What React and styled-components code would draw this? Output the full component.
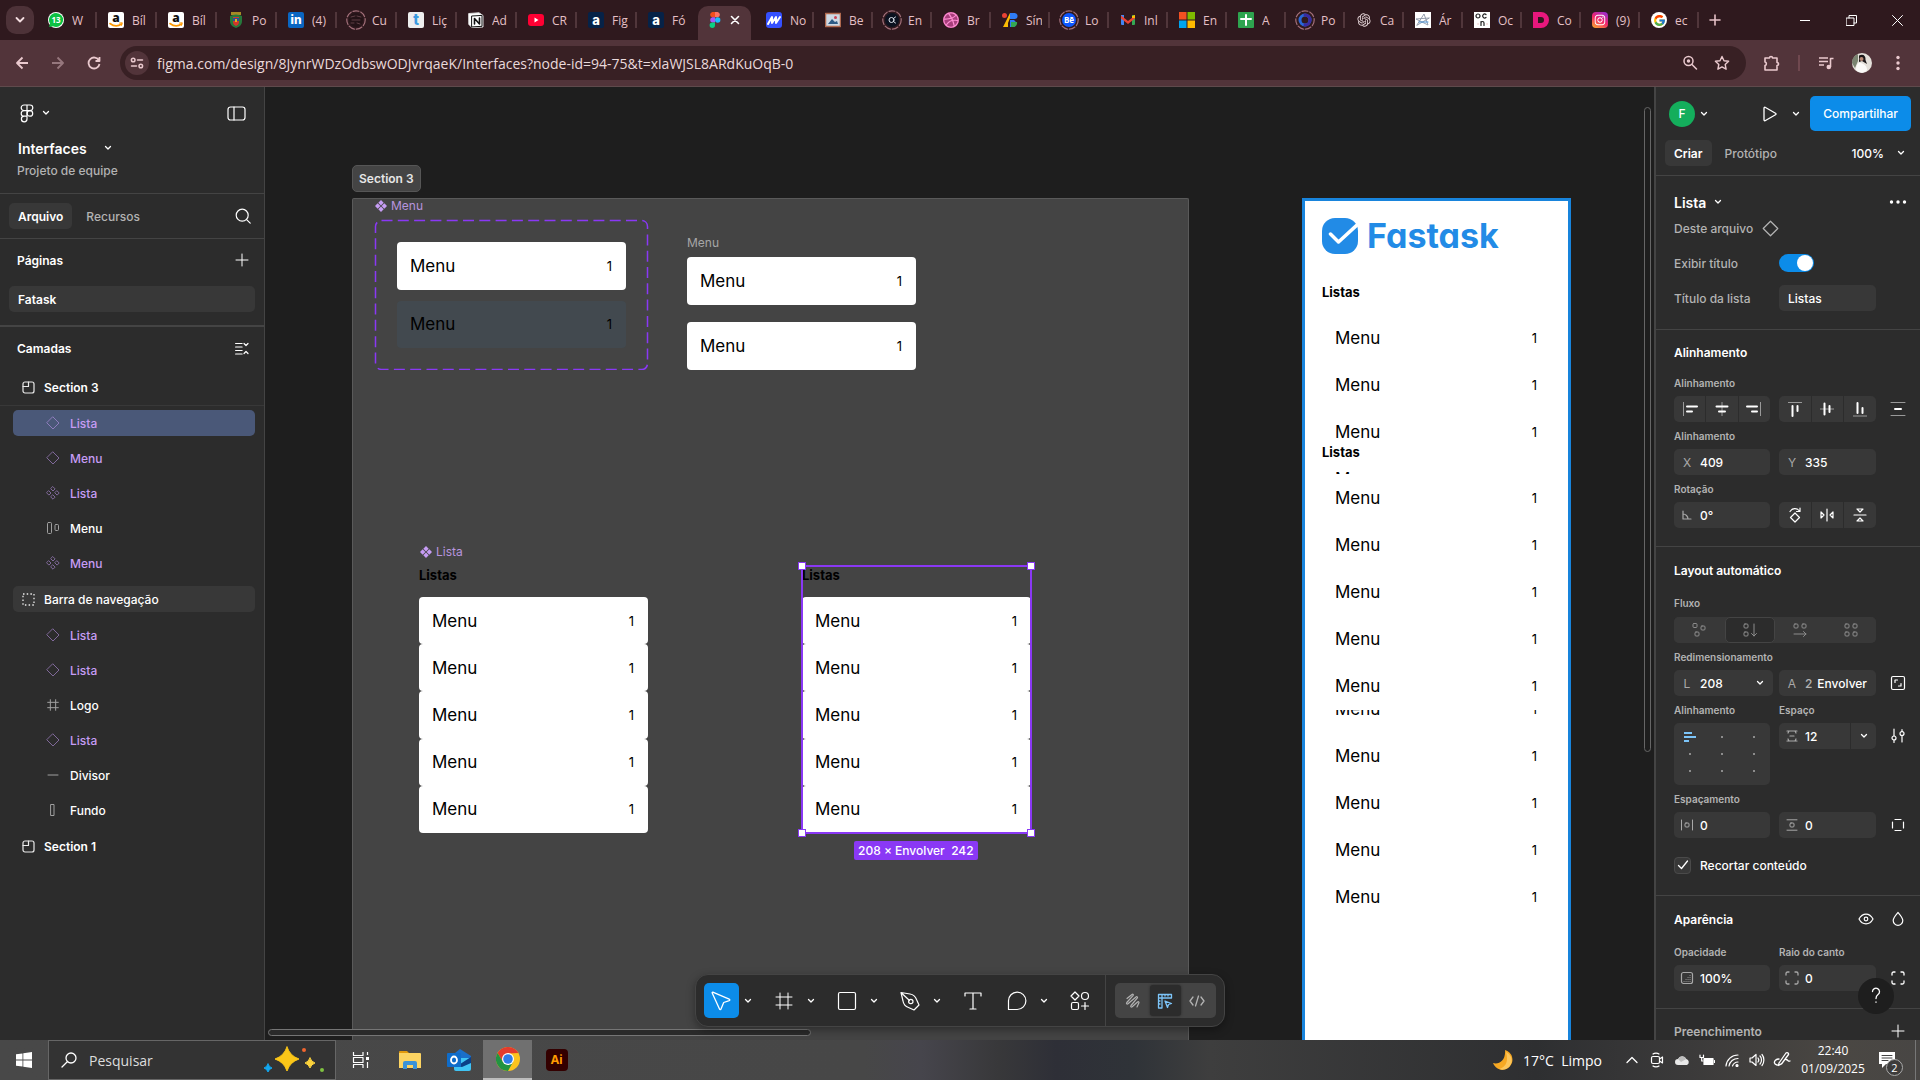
import React, { useState } from "react";
import styled, { createGlobalStyle, css } from "styled-components";
import { FaDribbble, FaInstagram } from "react-icons/fa";
import { RiOpenaiFill } from "react-icons/ri";
import { FcGoogle } from "react-icons/fc";

const GlobalStyle = createGlobalStyle`
  * { box-sizing: border-box; }
  body {
    margin: 0;
    overflow: hidden;
    background: #1e1e1e;
    color: #fff;
    font-family: Inter, "Liberation Sans", sans-serif;
    font-size: 12px;
  }
  button, input {
    font: inherit;
    color: inherit;
    border: 0;
    padding: 0;
    margin: 0;
    background: none;
    min-width: 0;
  }
  svg { display: block; flex: none; }
`;

/* ---------- icons ---------- */

const Icon = ({ w = 16, h = w, sw = 1, children, ...rest }) => (
  <svg
    width={w}
    height={h}
    viewBox={`0 0 ${w} ${h}`}
    fill="none"
    stroke="currentColor"
    strokeWidth={sw}
    strokeLinecap="round"
    strokeLinejoin="round"
    aria-hidden="true"
    {...rest}
  >
    {children}
  </svg>
);

const Chevron = () => (
  <Icon w={8} h={6} sw={1.3}>
    <path d="M1.5 1.5 4 4l2.5-2.5" />
  </Icon>
);

const Plus = () => (
  <Icon w={14}>
    <path d="M7 1v12M1 7h12" />
  </Icon>
);

const FigmaOutline = () => (
  <Icon w={14} h={19} sw={1.2}>
    <path d="M7 1H4a2.8 2.8 0 0 0 0 5.6h3zM7 1h3a2.8 2.8 0 0 1 0 5.6H7zM7 6.6H4a2.8 2.8 0 0 0 0 5.6h3zM7 12.2H4A2.8 2.8 0 1 0 7 15z" />
    <circle cx="9.9" cy="9.4" r="2.8" />
  </Icon>
);

const PanelIcon = () => (
  <Icon w={19} h={15} sw={1.2}>
    <rect x="1" y="1" width="17" height="13" rx="2.5" />
    <path d="M7 1v13" />
  </Icon>
);

const SearchIcon = () => (
  <Icon w={16} sw={1.2}>
    <circle cx="7.2" cy="7.2" r="6" />
    <path d="m11.6 11.6 3.6 3.6" />
  </Icon>
);

const CollapseIcon = () => (
  <Icon w={14} h={13} sw={1.2}>
    <path d="M.6 1.5h6.5M.6 5h6.5M.6 8.5h6.5M.6 12h6.5M9 1.5l2 2 2-2M9 11.5l2-2 2 2" />
  </Icon>
);

const SectionIcon = () => (
  <Icon w={13} sw={1.2}>
    <rect x="1" y="1" width="11" height="11" rx="2" />
    <path d="M6.5 1v4.5H1" />
  </Icon>
);

const Diamond = ({ s = 14 }) => (
  <Icon w={14} width={s} height={s} sw={1}>
    <path d="M7 1l6 6-6 6-6-6z" />
  </Icon>
);

const ComponentIcon = () => (
  <Icon w={14} sw={1}>
    <path d="M7 .8l2.1 2.1L7 5 4.9 2.9zM7 9l2.1 2.1L7 13.2 4.9 11.1zM2.9 4.9 5 7 2.9 9.1.8 7zM11.1 4.9 13.2 7l-2.1 2.1L9 7z" />
  </Icon>
);

const AutoLayoutIcon = () => (
  <Icon w={14}>
    <rect x="1.5" y="1.5" width="4" height="11" rx="1" />
    <rect x="9" y="3.5" width="3.5" height="6" rx="1" />
  </Icon>
);

const GroupIcon = () => (
  <Icon w={13} sw={1.3} strokeDasharray="1.5 2.2" strokeLinecap="butt">
    <rect x="1" y="1" width="11" height="11" />
  </Icon>
);

const FrameIcon = ({ s = 12 }) => (
  <Icon w={18} width={s} height={s} sw={18 / s}>
    <path d="M5 1v16M13 1v16M1 5h16M1 13h16" />
  </Icon>
);

const LineIcon = () => (
  <Icon w={14}>
    <path d="M2 7h10" />
  </Icon>
);

const RectIcon = () => (
  <Icon w={14}>
    <rect x="5" y="1.5" width="3" height="11" />
  </Icon>
);

const layerIcons = {
  section: SectionIcon,
  instance: Diamond,
  component: ComponentIcon,
  auto: AutoLayoutIcon,
  group: GroupIcon,
  frame: FrameIcon,
  line: LineIcon,
  rect: RectIcon,
};

/* ---------- browser chrome ---------- */

const Page = styled.div`
  display: grid;
  grid-template-rows: auto auto 1fr auto;
  height: 100vh;
  overflow: hidden;
`;

const TabStrip = styled.header`
  display: flex;
  align-items: center;
  height: 40px;
  padding-left: 6px;
  background: #2f191e;
  color: #e5c0c6;
  font-family: "Open Sans", "Noto Sans", sans-serif;
`;

const TabSearch = styled.button`
  display: grid;
  place-items: center;
  width: 28px;
  height: 28px;
  margin-right: 3px;
  border-radius: 10px;
  background: #4d3238;
  color: #f3dde0;
`;

const TabList = styled.nav`
  display: flex;
  align-self: stretch;
`;

const Tab = styled.button`
  display: flex;
  align-items: center;
  gap: 6px;
  width: 59px;
  height: 40px;
  padding-left: 9px;

  &:nth-child(-n + 10) {
    width: 60px;
  }
  &::after {
    content: "";
    width: 2px;
    height: 16px;
    margin-left: auto;
    background: ${(props) => (props.$noLine ? "transparent" : "#51363b")};
  }
  ${(props) =>
    props.$active &&
    css`
      gap: 5px;
      width: 53px;
      height: 34px;
      margin: 6px 4px 0 2px;
      padding: 0 0 6px 7px;
      border-radius: 10px 10px 0 0;
      background: #52343a;
      color: #fff;
      &::after {
        display: none;
      }
    `}
`;

const TabTitle = styled.span`
  width: 16px;
  overflow: hidden;
  white-space: nowrap;
  text-align: left;
`;

const Favicon = styled.span`
  display: grid;
  place-items: center;
  flex: none;
  width: 20px;
  height: 20px;
`;

const Letter = styled.span`
  display: grid;
  place-items: center;
  width: 16px;
  height: 16px;
  border-radius: ${(props) => props.$r || "2px"};
  background: ${(props) => props.$bg};
  color: ${(props) => props.$fg || "#fff"};
  font-family: Inter, sans-serif;
  font-size: ${(props) => props.$size || "13px"};
  font-weight: 800;
  line-height: 12px;
`;

const Amazon = () => (
  <Icon w={16} stroke="none">
    <rect width="16" height="16" rx="2" fill="#fff" />
    <text x="8" y="10" fill="#111" fontSize="12" fontWeight="800" textAnchor="middle">a</text>
    <path d="M2 11.5c4 3 8 3 11.5.5" stroke="#f90" strokeWidth="1.6" />
    <path d="m11.5 11 2.8-.2-.8 2.6" stroke="#f90" />
  </Icon>
);

const Ring = ({ children }) => (
  <Icon w={20} stroke="none">
    <circle cx="10" cy="10" r="9.2" stroke="#a3707a" strokeWidth="1.2" strokeDasharray="6 2" />
    {children}
  </Icon>
);

const FigmaColor = () => (
  <Icon w={12} h={16} stroke="none">
    <path d="M6 0H3.3a2.7 2.7 0 0 0 0 5.3H6z" fill="#f24e1e" />
    <path d="M6 0h2.7a2.7 2.7 0 0 1 0 5.3H6z" fill="#ff7262" />
    <path d="M6 5.3H3.3a2.7 2.7 0 0 0 0 5.3H6z" fill="#a259ff" />
    <circle cx="8.7" cy="8" r="2.7" fill="#1abcfe" />
    <path d="M6 10.6H3.3A2.7 2.7 0 1 0 6 13.3z" fill="#0acf83" />
  </Icon>
);

const tabs = [
  {
    title: "W",
    icon: (
      <Icon w={16} stroke="none">
        <circle cx="8" cy="8" r="8" fill="#fff" />
        <path d="M8 1a7 7 0 1 1-3 13.3L1.2 15l.8-3.400A7 7 0 0 1 8 1z" fill="#0cc143" />
        <text x="8" y="11" fill="#fff" fontSize="8" fontWeight="700" textAnchor="middle">13</text>
      </Icon>
    ),
  },
  { title: "Bíl", icon: <Amazon /> },
  { title: "Bíl", icon: <Amazon /> },
  {
    title: "Po",
    icon: (
      <Icon w={14} h={16} stroke="none">
        <path d="M2 0h10v3H2z" fill="#a58a25" />
        <path d="M1 4c4-2 8-2 12 0v5c0 4-3 6-6 7-3-1-6-3-6-7z" fill="#26783c" />
        <path d="M4 5h6v5c0 2-1 3-3 4-2-1-3-2-3-4z" fill="#d3362c" />
        <path d="M4 6h6v3H4z" fill="#2b4d9c" />
        <path d="M6 7h2v3H6z" fill="#e0b020" />
      </Icon>
    ),
  },
  { title: "(4)", icon: <Letter $bg="#0a66c2" $size="12px">in</Letter> },
  {
    title: "Cu",
    icon: (
      <Ring>
        <circle cx="10" cy="10" r="7" fill="#241317" />
        <path d="M5 7l4-1M11 6l4 1M5 13h3M11 13l3 1M6 10h8" stroke="#5f3f45" />
      </Ring>
    ),
  },
  { title: "Liç", icon: <Letter $bg="#eee" $fg="#3b9be0" $size="15px">t</Letter> },
  {
    title: "Ad",
    icon: (
      <Icon w={16}>
        <path d="M1 1.5 11 .8l4 2.7V15l-11 .6-3-3z" fill="#fff" stroke="#ddd" />
        <path d="M4 4l10-.6v10.9l-10 .6z" stroke="#111" />
        <path d="M6.5 12V6.5L11.5 12V6" stroke="#111" strokeWidth="1.6" />
      </Icon>
    ),
  },
  {
    title: "CR",
    icon: (
      <Icon w={16} stroke="none">
        <rect y="2" width="16" height="12" rx="3" fill="#f03" />
        <path d="M6.5 5.5v5l4-2.500z" fill="#fff" />
      </Icon>
    ),
  },
  { title: "Fig", icon: <Letter $bg="#062247">a</Letter> },
  { title: "Fó", icon: <Letter $bg="#062247">a</Letter>, noLine: true },
  { title: "", icon: <FigmaColor />, active: true },
  {
    title: "No",
    icon: (
      <Icon w={16} stroke="none">
        <rect width="16" height="16" rx="3" fill="#3550ff" />
        <path d="M2 12 6 5v6l4-6v6l4-6" stroke="#fff" strokeWidth="2" />
      </Icon>
    ),
  },
  {
    title: "Be",
    icon: (
      <Icon w={16} stroke="none">
        <rect x=".5" y="1.5" width="15" height="13" fill="#cdd9e4" stroke="#b0694e" strokeWidth="1.5" />
        <path d="M3 12l4-5 3 3 2-1 1 3z" fill="#2c5b86" />
        <circle cx="10.5" cy="5.5" r="1.5" fill="#c45" />
      </Icon>
    ),
  },
  {
    title: "En",
    icon: (
      <Ring>
        <circle cx="10" cy="10" r="7" fill="#0b1220" />
        <circle cx="9.5" cy="10" r="2.5" stroke="#dfe5ee" />
        <path d="M11.5 8.5 13.5 7M11.5 11.5l2 1.5" stroke="#dfe5ee" />
      </Ring>
    ),
  },
  {
    title: "Br",
    icon: (
      <Icon w={16} stroke="none">
        <circle cx="8" cy="8" r="8" fill="#a83e7c" />
        <FaDribbble size={16} color="#ff8ed2" />
      </Icon>
    ),
  },
  {
    title: "Sín",
    icon: (
      <Icon w={16} stroke="none">
        <circle cx="2.5" cy="3.5" r="2.500" fill="#ea4335" />
        <path d="M1 15 8 1v5L6 11v4z" fill="#fbbc04" />
        <path d="M8 1h4a3 3 0 0 1 1 6H8zM8 8h4a4 4 0 0 1 0 7H8z" fill="#2f7cf6" />
        <path d="M9 10h6a4 4 0 0 1-4 5H9z" fill="#34a853" />
      </Icon>
    ),
  },
  {
    title: "Lo",
    icon: (
      <Ring>
        <circle cx="10" cy="10" r="7" fill="#0c56ff" />
        <text x="10" y="13" fill="#fff" fontSize="8" fontWeight="700" textAnchor="middle">Bē</text>
      </Ring>
    ),
  },
  {
    title: "Inl",
    icon: (
      <Icon w={16} stroke="none">
        <path d="M1 3h3v10H2a1 1 0 0 1-1-1z" fill="#4285f4" />
        <path d="M12 3h3v9a1 1 0 0 1-1 1h-2z" fill="#34a853" />
        <path d="M1 3.5 8 9l7-5.500v3L8 12 1 6.500z" fill="#ea4335" />
        <path d="M12 6V4l3-1v3z" fill="#fbbc04" />
      </Icon>
    ),
  },
  {
    title: "En",
    icon: (
      <Icon w={16} stroke="none">
        <path d="M0 0h7.5v7.5H0z" fill="#f25022" />
        <path d="M8.5 0H16v7.5H8.5z" fill="#7fba00" />
        <path d="M0 8.5h7.5V16H0z" fill="#00a4ef" />
        <path d="M8.5 8.5H16V16H8.5z" fill="#ffb900" />
      </Icon>
    ),
  },
  {
    title: "A",
    icon: (
      <Icon w={16} stroke="none">
        <rect width="16" height="16" rx="1" fill="#2ea44f" />
        <path d="M8 3v10M3 7h10" stroke="#fff" strokeWidth="2" />
      </Icon>
    ),
  },
  {
    title: "Po",
    icon: (
      <Ring>
        <circle cx="10" cy="10" r="5" stroke="#2868d8" strokeWidth="3" />
        <path d="M10 5a5 5 0 0 1 0 10" stroke="#3a2aa0" strokeWidth="3" />
      </Ring>
    ),
  },
  { title: "Ca", icon: <RiOpenaiFill size={16} color="#e6d6d9" /> },
  {
    title: "Ár",
    icon: (
      <Icon w={16} stroke="none">
        <rect width="16" height="16" fill="#fff" />
        <path d="M2 13 9 2l4 11L1 7l13-1z" stroke="#8b95a5" strokeWidth=".9" />
        <path d="M4 10h9" stroke="#4a93d9" />
      </Icon>
    ),
  },
  {
    title: "Oc",
    icon: (
      <Icon w={16} stroke="none">
        <rect width="16" height="16" fill="#fff" />
        <circle cx="4" cy="4" r="2" stroke="#222" strokeWidth="1.2" />
        <path d="M12 2.500a2 2 0 1 0 0 3M7 13.500V9.500M7 11a1.500 1.500 0 0 1 3 0v2.500" stroke="#222" strokeWidth="1.2" />
        <path d="M4 12h.1M13 12h.1" stroke="#d88" />
      </Icon>
    ),
  },
  {
    title: "Co",
    icon: (
      <Icon w={16} stroke="none">
        <path d="M0 0h8a8 8 0 0 1 0 16H0zM5 5v6h3a3 3 0 0 0 0-6z" fill="#e8177d" fillRule="evenodd" />
      </Icon>
    ),
  },
  {
    title: "(9)",
    icon: (
      <Letter $bg="linear-gradient(30deg,#fdb32a,#f0246b 50%,#8c2fe0)" $r="4px">
        <FaInstagram size={12} />
      </Letter>
    ),
  },
  {
    title: "ec",
    icon: (
      <Letter $bg="#fff" $r="8px">
        <FcGoogle size={13} />
      </Letter>
    ),
  },
];

const NewTab = styled.button`
  display: grid;
  place-items: center;
  width: 32px;
  height: 28px;
`;

const WindowButtons = styled.div`
  display: flex;
  margin-left: auto;
  color: #fff;
  button {
    display: grid;
    place-items: center;
    width: 46px;
    height: 40px;
  }
`;

const AddressBar = styled.div`
  display: flex;
  align-items: center;
  height: 47px;
  padding: 0 4px;
  background: #52343a;
  border-bottom: 1px solid #5f4a4c;
  color: #eac9ce;
`;

const BarButton = styled.button`
  display: grid;
  place-items: center;
  flex: none;
  width: 36px;
  height: 36px;
  opacity: ${(props) => (props.disabled ? 0.45 : 1)};
  color: inherit;
`;

const Omnibox = styled.div`
  display: flex;
  align-items: center;
  flex: 1;
  height: 34px;
  margin: 0 8px;
  padding: 0 8px 0 5px;
  border-radius: 17px;
  background: #382024;
  button:last-child,
  button:nth-last-child(2) {
    width: 32px;
  }
  input {
    flex: 1;
    margin-left: 8px;
    outline: 0;
    color: #ead9db;
    font: 14px "Open Sans", "Noto Sans", sans-serif;
  }
`;

const SiteInfo = styled.button`
  display: grid;
  place-items: center;
  width: 24px;
  height: 24px;
  border-radius: 50%;
  background: #52343a;
`;

const BarLine = styled.span`
  width: 2px;
  height: 16px;
  margin: 0 8px;
  background: #70484f;
`;

const Browser = () => (
  <>
    <TabStrip>
      <TabSearch aria-label="Pesquisar guias">
        <Icon w={10} h={8} sw={1.8}>
          <path d="m1.5 2 3.5 3.5L8.500 2" />
        </Icon>
      </TabSearch>
      <TabList>
        {tabs.map((tab, i) => (
          <Tab key={i} $active={tab.active} $noLine={tab.noLine || tab.active}>
            <Favicon>{tab.icon}</Favicon>
            {tab.active ? (
              <Icon w={10} sw={1.6}>
                <path d="m1.5 1.5 7 7M8.5 1.5l-7 7" />
              </Icon>
            ) : (
              <TabTitle>{tab.title}</TabTitle>
            )}
          </Tab>
        ))}
      </TabList>
      <NewTab aria-label="Nova guia">
        <Icon w={12} sw={1.6}>
          <path d="M6 1v10M1 6h10" />
        </Icon>
      </NewTab>
      <WindowButtons>
        <button aria-label="Minimizar">
          <Icon w={10}><path d="M0 5.500h10" /></Icon>
        </button>
        <button aria-label="Restaurar">
          <Icon w={11}>
            <path d="M.5 3h7.5v7.5H.5zM3 3V.5h7.5V8H8" />
          </Icon>
        </button>
        <button aria-label="Fechar">
          <Icon w={11}><path d="m.5.5 10 10M10.5.5l-10 10" /></Icon>
        </button>
      </WindowButtons>
    </TabStrip>
    <AddressBar>
      <BarButton aria-label="Voltar">
        <Icon w={14} sw={1.8} strokeLinecap="butt"><path d="M13 7H2M7.5 1.5 2 7l5.5 5.5" /></Icon>
      </BarButton>
      <BarButton aria-label="Avançar" disabled>
        <Icon w={14} sw={1.8} strokeLinecap="butt"><path d="M1 7h11M6.5 1.5 12 7l-5.5 5.5" /></Icon>
      </BarButton>
      <BarButton aria-label="Recarregar">
        <Icon w={14} sw={1.8} strokeLinecap="butt"><path d="M12 4.5A5.5 5.5 0 1 0 12.5 8M12.5 1v4H8.5" /></Icon>
      </BarButton>
      <Omnibox>
        <SiteInfo aria-label="Ver informações do site">
          <Icon w={14} h={12} sw={1.5}>
            <circle cx="3.2" cy="3" r="1.8" />
            <path d="M7.5 3h5M1.5 9h5" />
            <circle cx="10.8" cy="9" r="1.8" />
          </Icon>
        </SiteInfo>
        <input
          aria-label="Endereço"
          defaultValue="figma.com/design/8JynrWDzOdbswODJvrqaeK/Interfaces?node-id=94-75&t=xlaWJSL8ARdKuOqB-0"
        />
        <BarButton aria-label="Zoom">
          <Icon w={16} sw={1.5}>
            <circle cx="6.5" cy="6" r="4.5" />
            <circle cx="6.5" cy="6" r="1" fill="currentColor" />
            <path d="m10 9.5 4.5 4.5" />
          </Icon>
        </BarButton>
        <BarButton aria-label="Favoritar">
          <Icon w={16} sw={1.4}>
            <path d="m8 1.5 2 4.3 4.6.5-3.4 3.2.9 4.7L8 11.900l-4.100 2.300.9-4.700L1.400 6.300 6 5.800z" />
          </Icon>
        </BarButton>
      </Omnibox>
      <BarButton aria-label="Extensões">
        <Icon w={18} sw={1.6}>
          <path d="M2 4h4.500a1.500 1.500 0 0 1 3 0H14v4.500a1.500 1.500 0 0 1 0 3V16H2v-4.500a1.800 1.800 0 0 0 0-3.500z" />
        </Icon>
      </BarButton>
      <BarLine />
      <BarButton aria-label="Controles de mídia">
        <Icon w={16} sw={1.6} strokeLinecap="butt">
          <path d="M1 3h9M1 6.5h9M1 10h5M12.5 12V3.5H15.5" />
          <circle cx="10.8" cy="12" r="1.5" fill="currentColor" />
        </Icon>
      </BarButton>
      <BarButton aria-label="Perfil">
        <Icon w={20} stroke="none">
          <circle cx="10" cy="10" r="10" fill="#e4e0da" />
          <path d="M0 10a10 10 0 0 1 6-9v7l-3 7z" fill="#7a8370" />
          <path d="M7 2.500c4-2 7 0 6.500 4.500L15 11l-5-3-3 1z" fill="#1b1718" />
          <circle cx="9.500" cy="6" r="2" fill="#b98b78" />
          <path d="M4 17c0-5 2-8 5-7s6 3 6 7c-3 4-8 3-11 0z" fill="#fbfaf8" />
        </Icon>
      </BarButton>
      <BarButton aria-label="Menu do Chrome">
        <Icon w={4} h={16} stroke="none" fill="currentColor">
          <circle cx="2" cy="2.5" r="1.7" />
          <circle cx="2" cy="8" r="1.7" />
          <circle cx="2" cy="13.5" r="1.7" />
        </Icon>
      </BarButton>
    </AddressBar>
  </>
);

/* ---------- left panel ---------- */

const Workspace = styled.div`
  display: flex;
  min-height: 0;
`;

const LeftPanel = styled.aside`
  width: 265px;
  flex: none;
  background: #2c2c2c;
  border-right: 1px solid #444;
  overflow: hidden;
`;

const PanelBlock = styled.section`
  padding: ${(props) => props.$pad};
  border-bottom: ${(props) => props.$line || "1px"} solid #444;
`;

const PanelRow = styled.div`
  display: flex;
  align-items: center;
  justify-content: space-between;
  height: 26px;
  margin-top: ${(props) => props.$mt || 0};
  padding: 0 ${(props) => props.$right || "15px"} 0 ${(props) => props.$left || "17px"};
`;

const Cluster = styled.div`
  display: flex;
  align-items: center;
  gap: ${(props) => props.$gap || "8px"};
`;

const Plain = styled.button`
  display: flex;
  align-items: center;
  justify-content: center;
  gap: 8px;
  flex: none;
  min-height: 24px;
  font-weight: 500;
`;

const FileName = styled.h1`
  margin: 0;
  font-size: 14px;
  font-weight: 600;
`;

const Muted = styled.p`
  margin: 0;
  padding: 0 17px;
  line-height: 20px;
  color: #b3b3b3;
  font-weight: 500;
`;

const PanelTitle = styled.h2`
  margin: 0;
  font-size: 12px;
  font-weight: 600;
  color: ${(props) => props.$color || "#fff"};
`;

const TabsGroup = styled.div`
  display: flex;
  gap: 5px;
`;

const Pill = styled.button`
  height: 26px;
  padding: 0 9px;
  border-radius: 5px;
  background: ${(props) => (props.$on ? "#383838" : "transparent")};
  color: ${(props) => (props.$on ? "#fff" : "#b3b3b3")};
  font-weight: ${(props) => (props.$on ? 600 : 500)};
`;

const PageItem = styled(Pill)`
  display: block;
  width: calc(100% - 18px);
  margin: 13px 9px 0;
  text-align: left;
`;

const Layer = styled.li`
  display: flex;
  align-items: center;
  height: ${(props) => (props.$top ? "37px" : "35px")};
  padding: 0 9px 0 13px;
  border-bottom: 1px solid ${(props) => (props.$edge ? "#383838" : "transparent")};

  button {
    display: flex;
    align-items: center;
    gap: ${(props) => (props.$top ? "9px" : "10px")};
    width: 100%;
    height: 26px;
    padding-left: ${(props) => (props.$top ? "8px" : "33px")};
    border-radius: 5px;
    background: ${(props) => props.$bg || "transparent"};
    color: ${(props) => (props.$purple ? "#c69cf4" : "#fff")};
    font-weight: ${(props) => (props.$bold ? 600 : 500)};
  }
  svg {
    opacity: ${(props) => (props.$top ? 0.9 : 0.55)};
  }
`;

const LayerList = styled.ul`
  margin: 8px 0 0;
  padding: 0;
  list-style: none;
`;

const IconSlot = styled.span`
  display: grid;
  place-items: center;
  width: 14px;
`;

const layers = [
  { name: "Section 3", icon: "section", top: true, bold: true, edge: true },
  { name: "Lista", icon: "instance", purple: true, bg: "#4a5878" },
  { name: "Menu", icon: "instance", purple: true },
  { name: "Lista", icon: "component", purple: true },
  { name: "Menu", icon: "auto" },
  { name: "Menu", icon: "component", purple: true },
  { name: "Barra de navegação", icon: "group", top: true, bg: "#383838" },
  { name: "Lista", icon: "instance", purple: true },
  { name: "Lista", icon: "instance", purple: true },
  { name: "Logo", icon: "frame" },
  { name: "Lista", icon: "instance", purple: true },
  { name: "Divisor", icon: "line" },
  { name: "Fundo", icon: "rect" },
  { name: "Section 1", icon: "section", top: true, bold: true },
];

const LayersPanel = () => (
  <LeftPanel>
    <PanelBlock $pad="13px 0 12px">
      <PanelRow $left="20px" $right="18px">
        <Plain aria-label="Menu principal">
          <FigmaOutline />
          <Chevron />
        </Plain>
        <Plain aria-label="Minimizar interface"><PanelIcon /></Plain>
      </PanelRow>
      <PanelRow $mt="9px" $left="18px">
        <Cluster $gap="17px">
          <FileName>Interfaces</FileName>
          <Plain aria-label="Opções do arquivo"><Chevron /></Plain>
        </Cluster>
      </PanelRow>
      <Muted>Projeto de equipe</Muted>
    </PanelBlock>
    <PanelBlock $pad="9px 0">
      <PanelRow $left="9px" $right="13px">
        <TabsGroup>
          <Pill $on>Arquivo</Pill>
          <Pill>Recursos</Pill>
        </TabsGroup>
        <Plain aria-label="Buscar"><SearchIcon /></Plain>
      </PanelRow>
    </PanelBlock>
    <PanelBlock $pad="8px 0 13px" $line="2px">
      <PanelRow>
        <PanelTitle>Páginas</PanelTitle>
        <Plain aria-label="Adicionar página"><Plus /></Plain>
      </PanelRow>
      <PageItem $on>Fatask</PageItem>
    </PanelBlock>
    <PanelRow $mt="8px">
      <PanelTitle>Camadas</PanelTitle>
      <Plain aria-label="Recolher camadas"><CollapseIcon /></Plain>
    </PanelRow>
    <LayerList>
      {layers.map((layer, i) => {
        const LayerIcon = layerIcons[layer.icon];
        return (
          <Layer
            key={i}
            $top={layer.top}
            $edge={layer.edge}
            $bg={layer.bg}
            $purple={layer.purple}
            $bold={layer.bold}
          >
            <button>
              <IconSlot><LayerIcon /></IconSlot>
              {layer.name}
            </button>
          </Layer>
        );
      })}
    </LayerList>
  </LeftPanel>
);

/* ---------- canvas ---------- */

const CanvasArea = styled.main`
  position: relative;
  flex: 1;
  min-width: 0;
  overflow: hidden;
  background: #1e1e1e;
`;

// every object on the canvas keeps its own x / y
const Node = styled.div`
  position: absolute;
  left: ${(props) => props.$x}px;
  top: ${(props) => props.$y}px;
  width: ${(props) => (props.$w ? `${props.$w}px` : "auto")};
  height: ${(props) => (props.$h ? `${props.$h}px` : "auto")};
`;

const SectionLabel = styled(Node)`
  padding: 0 6px;
  border: 1px solid #565656;
  border-radius: 5px;
  background: #444;
  color: #e6e6e6;
  font-weight: 600;
  line-height: 25px;
`;

const SectionFrame = styled(Node)`
  bottom: 0;
  border: 1px solid #5a5a5a;
  border-bottom: 0;
  border-radius: 2px 2px 0 0;
  background: #444;
`;

const NodeLabel = styled(Node)`
  display: flex;
  align-items: center;
  gap: 4px;
  line-height: 16px;
  color: ${(props) => props.$color || "#a6a6a6"};
`;

const CardStack = styled(Node)`
  display: flex;
  flex-direction: column;
  gap: ${(props) => props.$gap || 0}px;
`;

const Card = styled.div`
  display: flex;
  flex: 1;
  align-items: center;
  justify-content: space-between;
  padding: 0 14px 0 13px;
  border-radius: 4px;
  background: ${(props) => (props.$dim ? "#42494f" : "#fff")};
  color: #000;
  font-size: 17px;
  small {
    font-size: 13px;
  }
`;

const ListTitle = styled.h3`
  margin: 0 0 13px;
  color: #000;
  font-size: 13px;
  font-weight: 700;
  line-height: 17px;
  visibility: ${(props) => (props.$hidden ? "hidden" : "visible")};
`;

const MenuCard = ({ dim }) => (
  <Card $dim={dim}>
    <span>Menu</span>
    <small>1</small>
  </Card>
);

const List = ({ x, y, untitled }) => (
  <CardStack $x={x} $y={y} $w={229} $h={266}>
    <ListTitle $hidden={untitled}>Listas</ListTitle>
    {[1, 2, 3, 4, 5].map((n) => (
      <MenuCard key={n} />
    ))}
  </CardStack>
);

const Selection = styled(Node)`
  border: 2px solid #8a38f5;
  pointer-events: none;
`;

const Handle = styled.i`
  position: absolute;
  width: 8px;
  height: 8px;
  border: 1px solid #8a38f5;
  background: #fff;
  ${(props) => (props.$right ? "right: -5px;" : "left: -5px;")}
  ${(props) => (props.$bottom ? "bottom: -5px;" : "top: -5px;")}
`;

const SizeBadge = styled(Node)`
  padding: 0 4px;
  border-radius: 2px;
  background: #8a38f5;
  font-weight: 500;
  line-height: 19px;
  white-space: pre;
`;

const Phone = styled(Node)`
  bottom: 0;
  border: 3px solid #1884dc;
  border-bottom: 0;
  background: #fff;
`;

const Brand = styled(Node)`
  display: flex;
  align-items: center;
  gap: 9px;
  color: #228be6;
  font-size: 34px;
  font-weight: 700;
  line-height: 36px;
  font-feature-settings: "cv11";
`;

const ScrollY = styled.div`
  position: absolute;
  top: 20px;
  right: 3px;
  width: 7px;
  height: 645px;
  border: 1px solid #666;
  border-radius: 4px;
  background: #1e1e1e;
`;

const ScrollX = styled.div`
  position: absolute;
  left: 3px;
  bottom: 4px;
  width: 543px;
  height: 7px;
  border: 1px solid #757575;
  border-radius: 4px;
  background: #2a2a2a;
`;

const Toolbar = styled.div`
  position: absolute;
  left: 50%;
  bottom: 13px;
  display: flex;
  transform: translateX(-50%);
  height: 53px;
  border: 1px solid #444;
  border-radius: 13px;
  background: #2c2c2c;
  box-shadow: 0 3px 8px rgba(0, 0, 0, 0.35);
`;

const Tools = styled.div`
  display: flex;
  align-items: center;
  gap: 9px;
  padding: 0 7px 0 8px;
`;

const Tool = styled.button`
  display: grid;
  place-items: center;
  width: 35px;
  height: 35px;
  border-radius: 5px;
  background: ${(props) => (props.$on ? "#0c8ce9" : "transparent")};
`;

const ToolMenu = styled.button`
  display: grid;
  place-items: center;
  width: 19px;
  height: 35px;
`;

const Modes = styled.div`
  display: flex;
  align-items: center;
  margin: 8px 8px 8px 9px;
  padding: 0 2px;
  border-radius: 5px;
  background: #444;
  color: #b3b3b3;
  button {
    display: grid;
    place-items: center;
    width: 33px;
    height: 31px;
    border-radius: 3px;
  }
  button:nth-child(2) {
    width: 31px;
    background: #2c2c2c;
    box-shadow: 0 0 3px rgba(0, 0, 0, 0.4);
    color: #7cc4f8;
  }
`;

const ToolDivider = styled.span`
  width: 1px;
  background: #444;
`;

const tools = [
  {
    label: "Mover",
    on: true,
    menu: true,
    icon: (
      <Icon w={20} sw={1.3}>
        <path d="M1.8 1.2 18.200 8.200c.8.300.8 1.200 0 1.500l-5.500 1.800-2.700 6.500c-.3.800-1.200.7-1.500-.1L1.200 2c-.2-.6.1-1 .6-.8z" />
      </Icon>
    ),
  },
  { label: "Quadro", menu: true, icon: <FrameIcon s={18} /> },
  {
    label: "Retângulo",
    menu: true,
    icon: (
      <Icon w={20} sw={1.2}>
        <rect x="1.5" y="1.5" width="17" height="17" rx="1.5" />
      </Icon>
    ),
  },
  {
    label: "Caneta",
    menu: true,
    icon: (
      <Icon w={20} sw={1.2}>
        <path d="M1 1.5 10 3c3 .5 5.500 2.500 6.500 5.500l2.500 5.500-5 5-5.500-2.500C5.500 15.500 3.500 13 3 10zM1.500 2l8 7.500" />
        <circle cx="10.8" cy="10.5" r="2.2" />
      </Icon>
    ),
  },
  {
    label: "Texto",
    icon: (
      <Icon w={18} sw={1.2}>
        <path d="M1 4V1h16v3M9 1v16M6 17h6" />
      </Icon>
    ),
  },
  {
    label: "Comentário",
    menu: true,
    icon: (
      <Icon w={20} sw={1.2}>
        <path d="M1.5 18.5V10a8.700 8.700 0 1 1 8.700 8.500z" />
      </Icon>
    ),
  },
  {
    label: "Ações",
    icon: (
      <Icon w={20} sw={1.2}>
        <path d="m5 1 4 4-4 4-4-4z" />
        <circle cx="15" cy="5" r="3.5" />
        <rect x="1.5" y="11.5" width="7" height="7" rx="1.5" />
        <path d="M15 11.5v7M11.5 15h7" />
      </Icon>
    ),
  },
];

const PurpleDiamond = () => (
  <Icon w={12} stroke="none" fill="#c69cf4">
    <path d="M6 0l2.700 2.700L6 5.400 3.300 2.700zM6 6.600l2.700 2.700L6 12 3.300 9.300zM2.700 3.300 5.400 6 2.700 8.700 0 6zM9.300 3.300 12 6 9.300 8.700 6.600 6z" />
  </Icon>
);

const Canvas = () => (
  <CanvasArea>
    <SectionLabel $x={87} $y={78}>Section 3</SectionLabel>
    <SectionFrame $x={87} $y={111} $w={837} />

    <NodeLabel $x={110} $y={111} $color="#b794de"><PurpleDiamond />Menu</NodeLabel>
    <Node $x={109} $y={132}>
      <svg width="275" height="151" fill="none">
        <rect x="1.5" y="1.5" width="272" height="149" rx="6" stroke="#8a38f5" strokeWidth="1.5" strokeDasharray="11 5.300" />
      </svg>
    </Node>
    <CardStack $x={132} $y={155} $w={229} $h={106} $gap={11}>
      <MenuCard />
      <MenuCard dim />
    </CardStack>

    <NodeLabel $x={422} $y={148}>Menu</NodeLabel>
    <CardStack $x={422} $y={170} $w={229} $h={113} $gap={17}>
      <MenuCard />
      <MenuCard />
    </CardStack>

    <NodeLabel $x={155} $y={457} $color="#b794de"><PurpleDiamond />Lista</NodeLabel>
    <List x={154} y={480} />
    <List x={537} y={480} />
    <Selection $x={536} $y={478} $w={231} $h={269}>
      <Handle />
      <Handle $right />
      <Handle $bottom />
      <Handle $right $bottom />
    </Selection>
    <SizeBadge $x={589} $y={754}>{"208 × Envolver  242"}</SizeBadge>

    <Phone $x={1037} $y={111} $w={269} />
    <Brand $x={1057} $y={131}>
      <Icon w={36} stroke="none">
        <rect width="36" height="36" rx="13" fill="#228be6" />
        <path d="m8.5 16 8 8L36 6" stroke="#fff" strokeWidth="3.5" />
      </Icon>
      Fastask
    </Brand>
    <List x={1057} y={197} />
    <List x={1057} y={568} untitled />
    <List x={1057} y={357} />

    <ScrollY />
    <ScrollX />
    <Toolbar>
      <Tools>
        {tools.map((tool) => (
          <Cluster key={tool.label} $gap="0px">
            <Tool $on={tool.on} aria-label={tool.label}>{tool.icon}</Tool>
            {tool.menu && (
              <ToolMenu aria-label={`Mais opções de ${tool.label}`}><Chevron /></ToolMenu>
            )}
          </Cluster>
        ))}
      </Tools>
      <ToolDivider />
      <Modes>
        <button aria-label="Desenhar">
          <Icon w={16} sw={1.2}>
            <path d="M2 5.500 7 1.500c1-.7 1.800.2 1 1.200L1.800 9.500c-.8 1 .2 2 1.200 1.200L11 4c1-.8 2 .2 1.200 1.200L6 12.500c-.8 1 .2 2 1.200 1.200L12.500 9c1-.7 1.900.1 1.300 1.100L12 14" />
          </Icon>
        </button>
        <button aria-label="Design">
          <Icon w={16} sw={1.3}>
            <path d="M5 15H1.5V1.5h13V5H5zM5 1.5V5H1.5M8 1.5v1.5M11 1.5v1.5M1.5 8H3M1.5 11H3M8 8l6.5 2.5-3 1-1 3z" />
          </Icon>
        </button>
        <button aria-label="Modo dev">
          <Icon w={16} sw={1.3}>
            <path d="M4 4 1 8l3 4M12 4l3 4-3 4M9.5 3l-3 10" />
          </Icon>
        </button>
      </Modes>
    </Toolbar>
  </CanvasArea>
);

/* ---------- right panel ---------- */

const RightPanel = styled.aside`
  position: relative;
  flex: none;
  width: 266px;
  border-left: 2px solid #444;
  background: #2c2c2c;
  overflow: hidden;
`;

const TopBar = styled.div`
  display: flex;
  align-items: center;
  gap: 14px;
  height: 35px;
  padding: 0 9px 0 13px;
`;

const Push = styled.span`
  flex: 1;
`;

const Avatar = styled.span`
  display: grid;
  place-items: center;
  width: 26px;
  height: 26px;
  border-radius: 50%;
  background: #14ae5c;
  font-weight: 500;
`;

const ShareButton = styled.button`
  height: 35px;
  padding: 0 13px;
  margin-left: -4px;
  border-radius: 5px;
  background: #0c8ce9;
  font-weight: 500;
`;

const ModeRow = styled.div`
  display: flex;
  align-items: center;
  gap: 4px;
  margin-top: 9px;
  padding: 0 15px 0 9px;
`;

const Props = styled.section`
  padding: ${(props) => props.$pad || "9px 9px 18px 18px"};
  border-bottom: 1px solid #444;
`;

const PropsHead = styled.div`
  display: flex;
  align-items: center;
  justify-content: space-between;
  height: 26px;
  margin-bottom: ${(props) => (props.$tight ? "4px" : "6px")};
`;

const PropRow = styled.div`
  display: grid;
  grid-template-columns: 96px 97px 1fr;
  column-gap: 9px;
  align-items: ${(props) => props.$align || "end"};
`;

const InstanceRow = styled.div`
  display: grid;
  grid-template-columns: 96px 97px 1fr;
  column-gap: 9px;
  align-items: center;
  height: 26px;
  margin-top: 9px;
  color: #b3b3b3;
  font-weight: 500;
`;

const SourceLine = styled.div`
  display: flex;
  align-items: center;
  gap: 9px;
  height: 26px;
  color: #b3b3b3;
  font-weight: 500;
`;

const Field = styled.div`
  display: grid;
  grid-template-rows: 27px auto;
`;

const FieldLabel = styled.label`
  color: #b3b3b3;
  font-size: 10px;
  font-weight: 600;
  line-height: 28px;
  white-space: nowrap;
`;

const InputBox = styled.span`
  display: flex;
  align-items: center;
  height: 26px;
  border-radius: 5px;
  background: #383838;
  color: #fff;
  overflow: hidden;

  > svg,
  > i {
    width: 26px;
    font-style: normal;
    font-weight: 400;
    text-align: center;
    color: #a8a8a8;
    flex: none;
  }
  input {
    flex: 1;
    width: 0;
    padding-left: ${(props) => (props.$flush ? "9px" : 0)};
    outline: 0;
    color: ${(props) => (props.$hug ? "#b3b3b3" : "#fff")};
    font-weight: 500;
  }
  button {
    display: grid;
    place-items: center;
    width: 26px;
    height: 26px;
    border-left: 1px solid ${(props) => (props.$split ? "#2c2c2c" : "transparent")};
  }
`;

const Hug = styled.span`
  padding: 0 9px 0 5px;
  font-weight: 500;
`;

const Segments = styled.div`
  display: grid;
  grid-auto-flow: column;
  grid-auto-columns: 1fr;
  gap: 1px;
  height: 26px;
  border-radius: 5px;
  overflow: hidden;
  button {
    display: grid;
    place-items: center;
    background: #383838;
  }
`;

const FlowPicker = styled(Segments)`
  grid-column: 1 / 3;
  gap: 0;
  background: #383838;
  button {
    color: #8c8c8c;
  }
  button:nth-child(2) {
    border: 1px solid #444;
    border-radius: 5px;
    background: #2c2c2c;
  }
`;

const AlignBox = styled.div`
  display: grid;
  grid-template-columns: repeat(3, 1fr);
  place-items: center;
  height: 62px;
  padding: 5px 0;
  border-radius: 5px;
  background: #383838;
  button {
    display: grid;
    place-items: center;
    width: 24px;
    height: 17px;
    color: #8c8c8c;
  }
`;

const SideButton = styled.button`
  display: grid;
  place-items: center;
  width: 26px;
  height: 26px;
`;

const Switch = styled.input`
  appearance: none;
  width: 35px;
  height: 18px;
  border-radius: 9px;
  background: ${(props) => (props.checked ? "#0c8ce9" : "#555")};
  &::before {
    content: "";
    display: block;
    width: 16px;
    height: 16px;
    margin: 1px 1px 1px auto;
    border-radius: 50%;
    background: #fff;
  }
`;

const ClipRow = styled.label`
  display: flex;
  align-items: center;
  gap: 9px;
  height: 26px;
  margin-top: 14px;
  font-weight: 500;
`;

const Tick = styled.span`
  display: grid;
  place-items: center;
  width: 17px;
  height: 17px;
  border: 1px solid #4a4a4a;
  border-radius: 4px;
  background: #383838;
  input {
    appearance: none;
    grid-area: 1 / 1;
    width: 15px;
    height: 15px;
  }
  svg {
    grid-area: 1 / 1;
  }
`;

const HelpButton = styled.button`
  position: absolute;
  right: 26px;
  bottom: 26px;
  display: grid;
  place-items: center;
  width: 36px;
  height: 36px;
  border-radius: 50%;
  background: #1e1e1e;
`;

const AlignIcon = ({ d, edge }) => (
  <Icon w={16} strokeLinecap="butt">
    <path d={edge} stroke="#999" />
    <path d={d} strokeWidth="2" strokeLinecap="round" />
  </Icon>
);

const hAlign = [
  { label: "Alinhar à esquerda", edge: "M1.5 1v14", d: "M5 5.5h10M5 10.5h5" },
  { label: "Centralizar na horizontal", edge: "M8 1v14", d: "M2.5 5.5h11M5 10.5h6" },
  { label: "Alinhar à direita", edge: "M14.5 1v14", d: "M1 5.5h10M6 10.5h5" },
];
const vAlign = [
  { label: "Alinhar ao topo", edge: "M1 1.5h14", d: "M5.5 5v10M10.5 5v5" },
  { label: "Centralizar na vertical", edge: "M1 8h14", d: "M5.5 2.5v11M10.5 5v6" },
  { label: "Alinhar à base", edge: "M1 15h14", d: "M5.5 2v10M10.5 7v5" },
];

const Corners = () => (
  <Icon w={14} sw={1.3}>
    <path d="M1 4V2.5A1.500 1.500 0 0 1 2.500 1H4M10 1h1.500A1.500 1.500 0 0 1 13 2.500V4M13 10v1.500a1.500 1.500 0 0 1-1.500 1.500H10M4 13H2.500A1.500 1.500 0 0 1 1 11.500V10" />
  </Icon>
);

const Inspector = () => {
  const [showTitle, setShowTitle] = useState(true);
  const [clip, setClip] = useState(true);

  return (
    <RightPanel>
      <Props $pad="9px 0 9px">
        <TopBar>
          <Cluster $gap="5px"><Avatar>F</Avatar><Plain aria-label="Conta"><Chevron /></Plain></Cluster>
          <Push />
          <Plain aria-label="Apresentar">
            <Icon w={16} sw={1.3}>
              <path d="M2 2.300v11.400c0 .9.800 1.300 1.500.8l10-5.700c.7-.4.7-1.200 0-1.600l-10-5.700C2.800 1 2 1.400 2 2.300z" />
            </Icon>
          </Plain>
          <Plain aria-label="Opções de apresentação"><Chevron /></Plain>
          <ShareButton>Compartilhar</ShareButton>
        </TopBar>
        <ModeRow>
          <Pill $on>Criar</Pill>
          <Pill>Protótipo</Pill>
          <Push />
          <Plain><Cluster as="span" $gap="13px">100%<Chevron /></Cluster></Plain>
        </ModeRow>
      </Props>

      <Props $pad="13px 9px 18px 18px">
        <Cluster>
          <FileName as="h2">Lista</FileName>
          <Plain aria-label="Trocar instância"><Chevron /></Plain>
          <Push />
          <SideButton aria-label="Mais ações">
            <Icon w={18} h={4} stroke="none" fill="currentColor">
              <circle cx="2.5" cy="2" r="1.7" />
              <circle cx="9" cy="2" r="1.7" />
              <circle cx="15.5" cy="2" r="1.7" />
            </Icon>
          </SideButton>
        </Cluster>
        <SourceLine>
          Deste arquivo
          <Diamond s={17} />
        </SourceLine>
        <InstanceRow>
          <label htmlFor="show-title">Exibir título</label>
          <Switch
            id="show-title"
            type="checkbox"
            role="switch"
            checked={showTitle}
            onChange={() => setShowTitle(!showTitle)}
          />
        </InstanceRow>
        <InstanceRow>
          <label htmlFor="list-title">Título da lista</label>
          <InputBox $flush><input id="list-title" defaultValue="Listas" /></InputBox>
        </InstanceRow>
      </Props>

      <Props>
        <PropsHead $tight><PanelTitle>Alinhamento</PanelTitle></PropsHead>
        <PropRow>
          <Field>
            <FieldLabel as="span">Alinhamento</FieldLabel>
            <Segments>
              {hAlign.map((a) => (
                <button key={a.label} aria-label={a.label}><AlignIcon {...a} /></button>
              ))}
            </Segments>
          </Field>
          <Segments>
            {vAlign.map((a) => (
              <button key={a.label} aria-label={a.label}><AlignIcon {...a} /></button>
            ))}
          </Segments>
          <SideButton aria-label="Distribuir">
            <Icon w={16}>
              <path d="M1 1.5h14M1 14.5h14" stroke="#999" />
              <path d="M5 8h6" strokeWidth="2" />
            </Icon>
          </SideButton>
        </PropRow>
        <PropRow>
          <Field>
            <FieldLabel htmlFor="pos-x">Alinhamento</FieldLabel>
            <InputBox><i>X</i><input id="pos-x" defaultValue="409" /></InputBox>
          </Field>
          <InputBox><i>Y</i><input aria-label="Y" defaultValue="335" /></InputBox>
        </PropRow>
        <PropRow>
          <Field>
            <FieldLabel htmlFor="rotation">Rotação</FieldLabel>
            <InputBox>
              <Icon w={16} sw={1.2}>
                <path d="M4 4v8h8M4 7a5 5 0 0 1 5 5" />
              </Icon>
              <input id="rotation" defaultValue="0°" />
            </InputBox>
          </Field>
          <Segments>
            <button aria-label="Girar 90°">
              <Icon w={16} sw={1.2}>
                <path d="m8 6 4.500 4.500L8 15l-4.500-4.500zM3 4.500C5 1 10 .5 12.500 4M13 1v3.500H9.500" />
              </Icon>
            </button>
            <button aria-label="Virar na horizontal">
              <Icon w={16} sw={1.2}>
                <path d="M8 2v12M2 5v6l3-3zM14 5v6l-3-3z" />
              </Icon>
            </button>
            <button aria-label="Virar na vertical">
              <Icon w={16} sw={1.2}>
                <path d="M2 8h12M5 2h6L8 5zM5 14h6l-3-3z" />
              </Icon>
            </button>
          </Segments>
        </PropRow>
      </Props>

      <Props $pad="10px 9px 17px 18px">
        <PropsHead><PanelTitle>Layout automático</PanelTitle></PropsHead>
        <FieldLabel as="div">Fluxo</FieldLabel>
        <PropRow>
          <FlowPicker>
            <button aria-label="Livre">
              <Icon w={16}>
                <rect x="2" y="1.5" width="4" height="4" rx="1" />
                <rect x="10" y="4" width="4" height="4" rx="1" />
                <rect x="4" y="10" width="4" height="4" rx="1" />
              </Icon>
            </button>
            <button aria-label="Vertical">
              <Icon w={16}>
                <rect x="2" y="2" width="4" height="4" rx="1" />
                <rect x="2" y="10" width="4" height="4" rx="1" />
                <path d="M12 2v12M9.5 11.5 12 14l2.500-2.500" />
              </Icon>
            </button>
            <button aria-label="Horizontal">
              <Icon w={16}>
                <rect x="2" y="2" width="4" height="4" rx="1" />
                <rect x="10" y="2" width="4" height="4" rx="1" />
                <path d="M2 12h12M11.5 9.5 14 12l-2.500 2.500" />
              </Icon>
            </button>
            <button aria-label="Grade">
              <Icon w={16}>
                <rect x="2" y="2" width="4" height="4" rx="1" />
                <rect x="10" y="2" width="4" height="4" rx="1" />
                <rect x="2" y="10" width="4" height="4" rx="1" />
                <rect x="10" y="10" width="4" height="4" rx="1" />
              </Icon>
            </button>
          </FlowPicker>
        </PropRow>
        <PropRow>
          <Field>
            <FieldLabel htmlFor="size-w">Redimensionamento</FieldLabel>
            <InputBox>
              <i>L</i>
              <input id="size-w" defaultValue="208" />
              <button aria-label="Modo da largura"><Chevron /></button>
            </InputBox>
          </Field>
          <InputBox $hug>
            <i>A</i>
            <input aria-label="Altura" defaultValue="2" />
            <Hug>Envolver</Hug>
          </InputBox>
          <SideButton aria-label="Travar proporção">
            <Icon w={16} sw={1.2}>
              <rect x="1.5" y="1.5" width="13" height="13" rx="1.5" />
              <path d="M5 7.5V5h2.500M11 8.5V11H8.500" />
            </Icon>
          </SideButton>
        </PropRow>
        <PropRow $align="start">
          <Field>
            <FieldLabel as="span">Alinhamento</FieldLabel>
            <AlignBox>
              {[0, 1, 2, 3, 4, 5, 6, 7, 8].map((n) => (
                <button key={n} aria-label={`Alinhamento ${n + 1}`}>
                  {n === 0 ? (
                    <Icon w={14} h={12} sw={2} stroke="#7cc4f8" strokeLinecap="butt">
                      <path d="M1 2h8M1 6h12M1 10h5" />
                    </Icon>
                  ) : (
                    <Icon w={2} stroke="none"><rect width="2" height="2" fill="#8c8c8c" /></Icon>
                  )}
                </button>
              ))}
            </AlignBox>
          </Field>
          <Field>
            <FieldLabel htmlFor="gap">Espaço</FieldLabel>
            <InputBox $split>
              <Icon w={14} h={12} sw={1.2}>
                <path d="M2 1h10M3 3l1-2M11 3l-1-2M2 11h10M3 9l1 2M11 9l-1 2M5 6h4" />
              </Icon>
              <input id="gap" defaultValue="12" />
              <button aria-label="Opções de espaço"><Chevron /></button>
            </InputBox>
          </Field>
          <Field>
            <span />
            <SideButton aria-label="Configurações do layout automático">
              <Icon w={16} sw={1.2}>
                <path d="M4 1v7M4 12v2.500M12 1.500V4M12 8v6" />
                <circle cx="4" cy="10" r="2" />
                <circle cx="12" cy="5.5" r="2" />
              </Icon>
            </SideButton>
          </Field>
        </PropRow>
        <PropRow>
          <Field>
            <FieldLabel htmlFor="pad-x">Espaçamento</FieldLabel>
            <InputBox>
              <Icon w={14} h={12}>
                <path d="M1.500 1v10M12.500 1v10" />
                <rect x="5" y="4" width="4" height="4" rx="1" />
              </Icon>
              <input id="pad-x" defaultValue="0" />
            </InputBox>
          </Field>
          <InputBox>
            <Icon w={14} h={12}>
              <path d="M2 .8h10M2 11.200h10" />
              <rect x="5" y="4" width="4" height="4" rx="1" />
            </Icon>
            <input aria-label="Espaçamento vertical" defaultValue="0" />
          </InputBox>
          <SideButton aria-label="Espaçamento individual">
            <Icon w={14} sw={1.2}>
              <path d="M4 1.5h6M4 12.5h6M1.500 4v6M12.500 4v6" />
            </Icon>
          </SideButton>
        </PropRow>
        <ClipRow>
          <Tick>
            <input type="checkbox" checked={clip} onChange={() => setClip(!clip)} />
            {clip && <Icon w={12} sw={1.3}><path d="m1.500 6.500 3 3L10.500 2" /></Icon>}
          </Tick>
          Recortar conteúdo
        </ClipRow>
      </Props>

      <Props $pad="10px 9px 17px 18px">
        <PropsHead>
          <PanelTitle>Aparência</PanelTitle>
          <Cluster $gap="6px">
            <SideButton aria-label="Visibilidade">
              <Icon w={16} h={12} sw={1.2}>
                <path d="M1 6c3.500-6.500 10.500-6.500 14 0-3.500 6.500-10.500 6.500-14 0z" />
                <circle cx="8" cy="6" r="1.8" />
              </Icon>
            </SideButton>
            <SideButton aria-label="Modo de mesclagem">
              <Icon w={14} h={16} sw={1.2}>
                <path d="M7 1.500c3 3.500 4.800 5.500 4.800 8a4.800 4.800 0 0 1-9.600 0c0-2.500 1.800-4.500 4.800-8z" />
              </Icon>
            </SideButton>
          </Cluster>
        </PropsHead>
        <PropRow>
          <Field>
            <FieldLabel htmlFor="opacity">Opacidade</FieldLabel>
            <InputBox>
              <Icon w={14} sw={1.2}>
                <rect x="1.5" y="1.5" width="11" height="11" rx="2" />
                <path d="M4 10.500h.1M6 10.500h.1M8 10.500h.1M10 10.500h.1M6 8.500h.1M8 8.500h.1M10 8.500h.1M8 6.500h.1M10 6.500h.1M10 4.500h.1" strokeWidth=".9" />
              </Icon>
              <input id="opacity" defaultValue="100%" />
            </InputBox>
          </Field>
          <Field>
            <FieldLabel htmlFor="radius">Raio do canto</FieldLabel>
            <InputBox>
              <Corners />
              <input id="radius" defaultValue="0" />
            </InputBox>
          </Field>
          <SideButton aria-label="Cantos individuais"><Corners /></SideButton>
        </PropRow>
      </Props>
      <Props>
        <PropsHead>
          <PanelTitle $color="#b3b3b3">Preenchimento</PanelTitle>
          <SideButton aria-label="Adicionar preenchimento"><Plus /></SideButton>
        </PropsHead>
      </Props>
      <HelpButton aria-label="Ajuda">
        <Icon w={12} h={18} sw={1.3}>
          <path d="M2.5 4.5a3.500 3.500 0 1 1 5.500 3C6.500 8.600 6 9.300 6 11.500M6 15v.3" />
        </Icon>
      </HelpButton>
    </RightPanel>
  );
};

/* ---------- taskbar ---------- */

const Taskbar = styled.footer`
  display: flex;
  align-items: center;
  height: 40px;
  background: linear-gradient(
    90deg,
    #484848 0%,
    #474747 45%,
    #46454c 48%,
    #38383a 52%,
    #2e2f37 55%,
    #2f3338 59%,
    #3e3e3e 63%,
    #2e2f31 80%,
    #3b3a3a 88%,
    #4a4743 96%,
    #484644 100%
  );
  font-family: "Open Sans", "Noto Sans", sans-serif;
`;

const TaskButton = styled.button`
  display: grid;
  place-items: center;
  width: ${(props) => props.$w || "49px"};
  height: 40px;
  ${(props) =>
    props.$active &&
    css`
      background: #707070;
      border-bottom: 2px solid #bdbdbd;
    `}
`;

const TaskSearch = styled.label`
  display: flex;
  align-items: center;
  gap: 12px;
  width: 288px;
  height: 40px;
  padding-left: 12px;
  border: 1px solid #666;
  background: #333;
  input {
    flex: 1;
    font-size: 14px;
    outline: 0;
  }
  input::placeholder {
    color: #ddd;
    opacity: 1;
  }
`;

const Tray = styled.div`
  display: flex;
  align-items: center;
  margin-left: auto;
`;

const Weather = styled.button`
  display: flex;
  align-items: center;
  gap: 9px;
  margin-right: 18px;
  font-size: 14px;
  white-space: pre;
`;

const Clock = styled.button`
  width: 72px;
  margin-left: 3px;
  font-size: 12px;
  line-height: 18px;
  text-align: center;
`;

const NoticeButton = styled.button`
  position: relative;
  display: grid;
  place-items: center;
  width: 47px;
  height: 40px;
  margin-right: 4px;
  padding-right: 11px;
  border-right: 1px solid #777;
`;

const Count = styled.span`
  position: absolute;
  left: 17px;
  top: 19px;
  width: 17px;
  height: 17px;
  border: 1px solid #aaa;
  border-radius: 50%;
  background: #3d3c3b;
  font-size: 11px;
  line-height: 15px;
`;

const AiTile = styled.span`
  width: 22px;
  height: 22px;
  border-radius: 4px;
  background: #330000;
  color: #ff9a00;
  font: 700 12px/21px Inter, sans-serif;
`;

const star = (x, y, r) => {
  const k = r * 0.25;
  return `M${x} ${y - r}Q${x + k} ${y - k} ${x + r} ${y}Q${x + k} ${y + k} ${x} ${y + r}Q${x - k} ${y + k} ${x - r} ${y}Q${x - k} ${y - k} ${x} ${y - r}z`;
};

const trayIcons = [
  {
    label: "Gravação",
    icon: (
      <Icon w={16} sw={1.2}>
        <rect x="2.5" y="4.5" width="8" height="7" rx="1.5" />
        <path d="m10.5 7 3-2v6l-3-2M4 2c1.500-1.200 4.500-1.200 6 0M4 14c1.500 1.200 4.500 1.200 6 0" />
      </Icon>
    ),
  },
  {
    label: "OneDrive",
    icon: (
      <Icon w={16} h={11} stroke="none">
        <path d="M4 10a3 3 0 0 1 0-6 4.500 4.500 0 0 1 8.300 0A3.200 3.200 0 0 1 13 10z" fill="#e8e8e8" />
        <path d="M4 4a4.500 4.500 0 0 1 8.300 0L7 7z" fill="#bdbdbd" />
      </Icon>
    ),
  },
  {
    label: "Bateria",
    icon: (
      <Icon w={16} h={12} sw={1.2}>
        <path d="M5 4.5h9v6H5z" fill="#fff" />
        <path d="M15.500 6.500v2M1 1v2.500h3.500V1M2.700 3.500V7H4" />
      </Icon>
    ),
  },
  {
    label: "Rede",
    icon: (
      <Icon w={14} sw={1.2}>
        <path d="M1 13A12 12 0 0 1 13 2M4 13a9 9 0 0 1 9-7.500M7.500 13A6 6 0 0 1 13 9" />
        <circle cx="12" cy="12.5" r="1" fill="#fff" />
      </Icon>
    ),
  },
  {
    label: "Volume",
    icon: (
      <Icon w={16} h={14} sw={1.2}>
        <path d="M1 5h2l4-3.500v11L3 9H1zM9 5c.8 1 .8 3 0 4M11 3c2 2 2 6 0 8M13 1.500c2.500 3 2.500 8 0 11" />
      </Icon>
    ),
  },
  {
    label: "Caneta",
    icon: (
      <Icon w={18} sw={1.3}>
        <path d="M6 12 13 2c1-1 3 0 2.500 1.500L8.500 13 5.500 14.500zM6 8c-3 0-5 2-4.500 4s4 3 6.500 1M13 8.500c2 0 2 2.500 4 1.500" />
      </Icon>
    ),
  },
];

const WindowsTaskbar = () => (
  <Taskbar>
    <TaskButton $w="48px" aria-label="Iniciar">
      <Icon w={16} stroke="none" fill="#fff">
        <path d="M0 2.300 6.500 1.400v6.100H0zM7.300 1.300 16 0v7.500H7.300zM0 8.400h6.500v6.200L0 13.700zM7.300 8.400H16V16l-8.700-1.300z" />
      </Icon>
    </TaskButton>
    <TaskSearch>
      <Icon w={16} sw={1.3}>
        <circle cx="10" cy="6" r="5" />
        <path d="M6.300 9.700 1 15" />
      </Icon>
      <input placeholder="Pesquisar" aria-label="Pesquisar" />
      <Icon w={74} h={36} stroke="none">
        <path d={star(26, 17, 12)} fill="#fbc618" stroke="#fbc618" />
        <path d={star(49, 21, 5)} fill="#fbd23c" stroke="#fbd23c" />
        <path d={star(7, 26, 4)} fill="#12a7ef" stroke="#12a7ef" />
        <circle cx="43" cy="8" r="2" fill="#f0652f" />
        <circle cx="61" cy="28" r="2" fill="#7fc241" />
      </Icon>
    </TaskSearch>
    <TaskButton aria-label="Visão de tarefas">
      <Icon w={18} sw={1.2} strokeLinecap="butt">
        <path d="M1.500 1v3.500H11V1M1.500 6.500H11v5H1.500zM1.500 17v-3.500H11V17M15.500 1v3M15.500 11v6" />
        <path d="M14 6h3v3h-3z" fill="#fff" stroke="none" />
      </Icon>
    </TaskButton>
    <TaskButton aria-label="Explorador de Arquivos">
      <Icon w={22} h={20} stroke="none">
        <path d="M0 2a1 1 0 0 1 1-1h7l2 2h-10z" fill="#e29a0c" />
        <path d="M0 3h21a1 1 0 0 1 1 1v14H0z" fill="#fcd462" />
        <path d="M4 19v-6a2 2 0 0 1 2-2h10a2 2 0 0 1 2 2v6h-4v-4H8v4z" fill="#3a93d8" />
      </Icon>
    </TaskButton>
    <TaskButton aria-label="Outlook">
      <Icon w={24} h={22} stroke="none">
        <path d="M3 8 13 0l11 7v5H3z" fill="#1a6fc9" />
        <path d="M7 9h17v11a2 2 0 0 1-2 2H9a2 2 0 0 1-2-2z" fill="#40c4f4" />
        <path d="m10 17 14-9v6l-9 4z" fill="#0b3f87" />
        <rect y="4" width="14" height="14" rx="1" fill="#0f6cc9" />
        <ellipse cx="7" cy="11" rx="3" ry="3.5" stroke="#fff" strokeWidth="1.8" />
      </Icon>
    </TaskButton>
    <TaskButton $active aria-label="Chrome">
      <Icon w={24} stroke="none">
        <circle cx="12" cy="12" r="12" fill="#fcc31e" />
        <path d="M12 6.500 22.400 6A12 12 0 0 0 1.600 6L7 15z" fill="#e33b2e" />
        <path d="M1.600 6A12 12 0 0 0 12 24l5-9-10 0z" fill="#229342" />
        <circle cx="12" cy="12" r="6" fill="#fff" />
        <circle cx="12" cy="12" r="4.8" fill="#2f7be8" />
      </Icon>
    </TaskButton>
    <TaskButton aria-label="Illustrator"><AiTile>Ai</AiTile></TaskButton>
    <Tray>
      <Weather>
        <Icon w={22} stroke="none">
          <path d="M13 1a10 10 0 1 1-12 13c6 2 13-3 12-13z" fill="#f6a823" />
          <path d="M14 3a9 9 0 0 1-7 17c6-1 10-7 7-17z" fill="#fcc65c" />
        </Icon>
        {"17°C  Limpo"}
      </Weather>
      <TaskButton $w="24px" aria-label="Ícones ocultos">
        <Icon w={12} h={8} sw={1.3}><path d="m1 6.500 5-5 5 5" /></Icon>
      </TaskButton>
      {trayIcons.map((item) => (
        <TaskButton key={item.label} $w="25px" aria-label={item.label}>{item.icon}</TaskButton>
      ))}
      <Clock>22:40<br />01/09/2025</Clock>
      <NoticeButton aria-label="Notificações">
        <Icon w={18} stroke="none">
          <path d="M1 1h16v12H8l-4 4v-4H1z" fill="#fff" />
          <path d="M4 4.500h10M4 7h10M4 9.500h6" stroke="#444" />
        </Icon>
        <Count>2</Count>
      </NoticeButton>
    </Tray>
  </Taskbar>
);

export default function App() {
  return (
    <>
      <GlobalStyle />
      <Page>
        <Browser />
        <Workspace>
          <LayersPanel />
          <Canvas />
          <Inspector />
        </Workspace>
        <WindowsTaskbar />
      </Page>
    </>
  );
}
